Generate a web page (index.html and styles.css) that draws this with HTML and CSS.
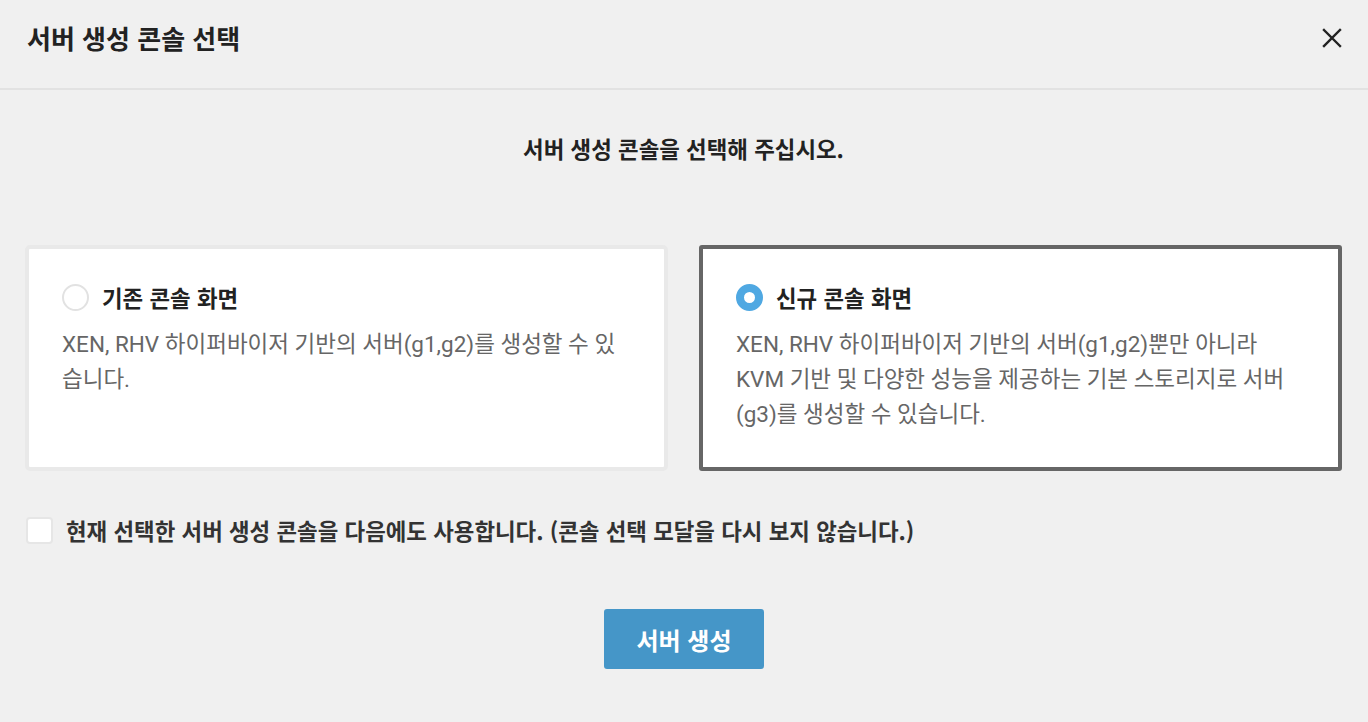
FILE: index.html
```html
<!DOCTYPE html>
<html lang="ko">
<head>
<meta charset="utf-8">
<title>서버 생성 콘솔 선택</title>
<link rel="stylesheet" href="styles.css">
</head>
<body>
<div class="modal">
  <header class="modal-header">
    <h1 class="modal-title">서버 생성 콘솔 선택</h1>
    <button class="close-btn" aria-label="닫기">
      <svg width="20" height="20" viewBox="0 0 20 20"><path d="M2 2L18 18M18 2L2 18" stroke="#222" stroke-width="2.4" stroke-linecap="square" fill="none"/></svg>
    </button>
  </header>
  <main class="modal-body">
    <p class="subtitle">서버 생성 콘솔을 선택해 주십시오.</p>
    <div class="options">
      <label class="option">
        <div class="option-head">
          <span class="radio"></span>
          <span class="option-title">기존 콘솔 화면</span>
        </div>
        <p class="option-desc">XEN, RHV 하이퍼바이저 기반의 서버(g1,g2)를 생성할 수 있습니다.</p>
      </label>
      <label class="option selected">
        <div class="option-head">
          <span class="radio checked"></span>
          <span class="option-title">신규 콘솔 화면</span>
        </div>
        <p class="option-desc">XEN, RHV 하이퍼바이저 기반의 서버(g1,g2)뿐만 아니라<br>KVM 기반 및 다양한 성능을 제공하는 기본 스토리지로 서버(g3)를 생성할 수 있습니다.</p>
      </label>
    </div>
    <label class="remember">
      <span class="checkbox"></span>
      <span class="remember-text">현재 선택한 서버 생성 콘솔을 다음에도 사용합니다. (콘솔 선택 모달을 다시 보지 않습니다.)</span>
    </label>
    <div class="actions">
      <button class="primary-btn">서버 생성</button>
    </div>
  </main>
</div>
</body>
</html>
```
FILE: styles.css
```css
* { box-sizing: border-box; }
html, body { margin: 0; padding: 0; }
body {
  background: #f0f0f0;
  font-family: Roboto, "Noto Sans CJK KR", sans-serif;
  color: #222;
  width: 1368px;
  height: 722px;
  overflow: hidden;
}
.modal-header {
  height: 90px;
  border-bottom: 2px solid #e2e2e2;
  display: flex;
  align-items: center;
  justify-content: space-between;
  padding: 0 26px 13px 27px;
}
.modal-title {
  margin: 0;
  font-family: "Noto Sans CJK KR", sans-serif;
  font-size: 26px;
  line-height: 36px;
  font-weight: 700;
  color: #222;
}
.close-btn {
  border: 0;
  background: transparent;
  padding: 0;
  width: 20px;
  height: 20px;
  display: flex;
  cursor: pointer;
}
.modal-body {
  padding: 43px 26px 0 25px;
}
.subtitle {
  margin: 0;
  text-align: center;
  font-family: "Noto Sans CJK KR", sans-serif;
  font-size: 22.4px;
  line-height: 30px;
  font-weight: 700;
  color: #222;
}
.options {
  margin-top: 82px;
  display: flex;
  gap: 31px;
}
.option {
  flex: 1;
  background: #fff;
  border: 4px solid #e9e9e9;
  border-radius: 5px;
  padding: 34px 30px 30px 33px;
  height: 226px;
}
.option.selected {
  border-color: #666;
  border-radius: 3px;
}
.option-head {
  display: flex;
  align-items: center;
  gap: 13px;
  height: 28px;
}
.radio {
  width: 27px;
  height: 27px;
  border-radius: 50%;
  border: 2px solid #e2e2e2;
  background: #fff;
  flex: none;
}
.radio.checked {
  border: 8px solid #4fa8e2;
  background: #fff;
}
.option-title {
  font-family: "Noto Sans CJK KR", sans-serif;
  font-size: 22.4px;
  font-weight: 700;
  color: #222;
}
.option-desc {
  margin: 16px 0 0;
  font-family: Roboto, "Noto Sans CJK KR", sans-serif;
  font-size: 22.5px;
  line-height: 35px;
  color: #666;
}
.remember {
  margin-top: 43px;
  display: flex;
  align-items: center;
  gap: 13px;
  padding-left: 1px;
}
.checkbox {
  width: 27px;
  height: 27px;
  background: #fff;
  border: 2px solid #e6e6e6;
  border-radius: 4px;
  flex: none;
}
.remember-text {
  font-family: "Noto Sans CJK KR", sans-serif;
  font-size: 22.4px;
  font-weight: 700;
  color: #333;
}
.actions {
  margin-top: 63px;
  display: flex;
  justify-content: center;
  padding-left: 1px;
}
.primary-btn {
  width: 160px;
  height: 60px;
  border: 0;
  border-radius: 3px;
  background: #4596c8;
  color: #fff;
  font-family: "Noto Sans CJK KR", sans-serif;
  font-size: 24px;
  font-weight: 700;
  cursor: pointer;
}
```
